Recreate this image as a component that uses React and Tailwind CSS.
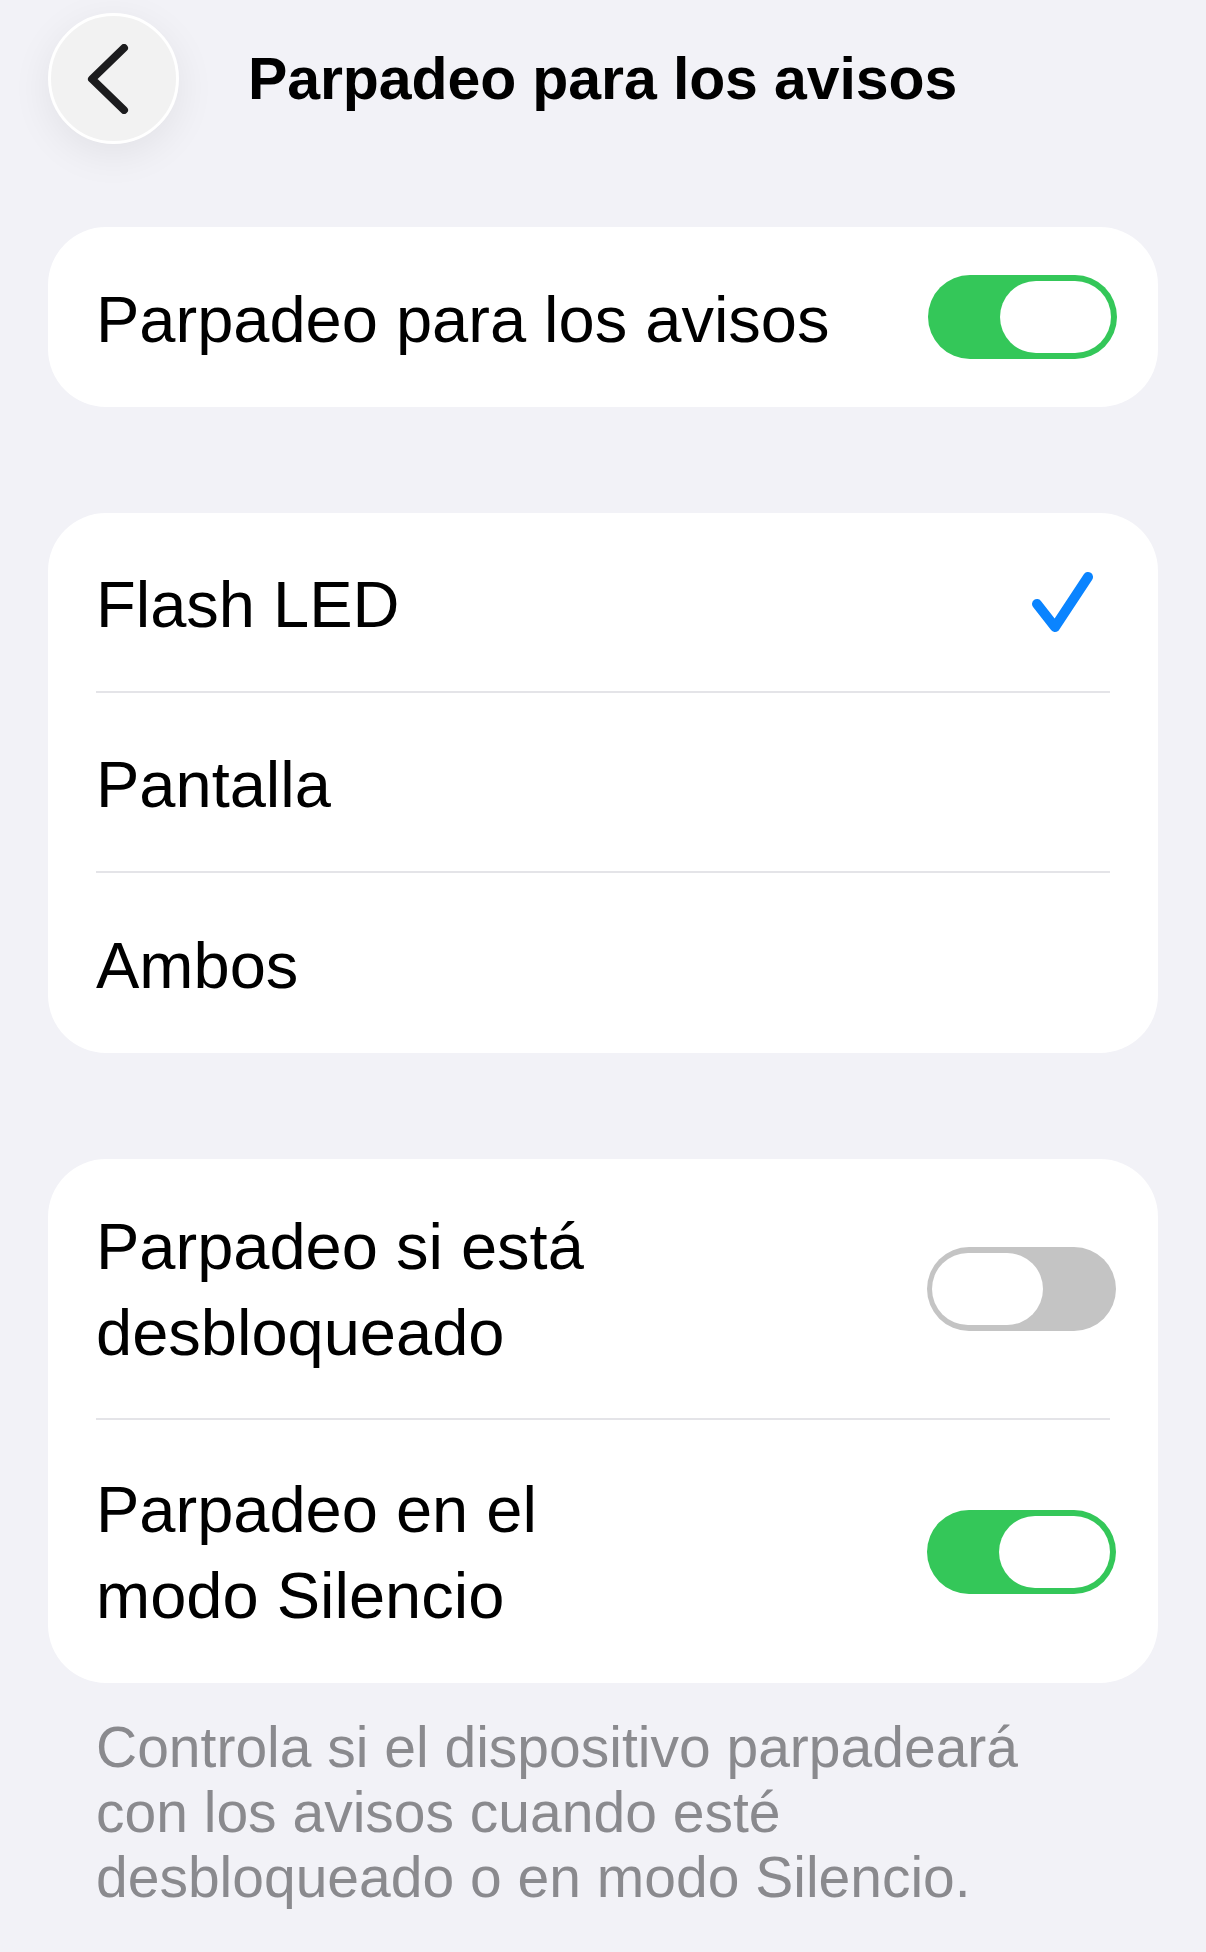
import React from 'react';

const font = "font-['Liberation_Sans','Noto_Sans',Arial,sans-serif]";

const Toggle = ({ on }) => (
  <div
    className={`w-[189px] h-[84px] rounded-full flex items-center flex-shrink-0 ${
      on ? 'bg-[#34c759] justify-end pr-[6px]' : 'bg-[#c4c4c4] justify-start pl-[5px]'
    }`}
  >
    <div className="w-[111px] h-[72px] rounded-full bg-white" />
  </div>
);

const Divider = () => <div className="h-[2px] bg-[#e4e4e8] ml-[48px] mr-[48px]" />;

const Check = () => (
  <svg width="66" height="66" viewBox="0 0 66 66" fill="none" className="flex-shrink-0">
    <path d="M7 35 L25 58 L58 8" stroke="#0a84ff" strokeWidth="10" strokeLinecap="round" strokeLinejoin="round" />
  </svg>
);

export default function App() {
  return (
    <div className={`min-h-screen bg-[#f2f2f7] text-black ${font}`}>
      <div className="px-[48px] pt-[13px]">
        {/* cabecera */}
        <div className="flex items-center h-[131px]">
          <button className="w-[131px] h-[131px] rounded-full bg-[#f2f2f2] border-[3px] border-white shadow-[0_10px_40px_rgba(0,0,0,0.07)] flex items-center justify-center flex-shrink-0">
            <svg width="44" height="70" viewBox="0 0 44 70" fill="none" className="mr-[12px]">
              <path d="M38 4 L6 35 L38 66" stroke="#1c1c1e" strokeWidth="8" strokeLinecap="round" strokeLinejoin="round" />
            </svg>
          </button>
          <h1 className="ml-[69px] text-[59px] font-bold leading-none tracking-[-0.1px] pt-[2px]">Parpadeo para los avisos</h1>
        </div>

        {/* interruptor principal */}
        <div className="mt-[83px] h-[180px] bg-white rounded-[58px] flex items-center justify-between pl-[48px] pr-[41px]">
          <span className="text-[65px] leading-none pt-[5px]">Parpadeo para los avisos</span>
          <Toggle on />
        </div>

        {/* opciones */}
        <div className="mt-[106px] bg-white rounded-[58px] overflow-hidden">
          <div className="h-[178px] flex items-center justify-between pl-[48px] pr-[62px]">
            <span className="text-[65px] leading-none pt-[5px]">Flash LED</span>
            <Check />
          </div>
          <Divider />
          <div className="h-[178px] flex items-center pl-[48px]">
            <span className="text-[65px] leading-none pt-[5px]">Pantalla</span>
          </div>
          <Divider />
          <div className="h-[180px] flex items-center pl-[48px]">
            <span className="text-[65px] leading-none pt-[5px]">Ambos</span>
          </div>
        </div>

        {/* ajustes extra */}
        <div className="mt-[106px] bg-white rounded-[58px] overflow-hidden">
          <div className="h-[259px] flex items-center justify-between pl-[48px] pr-[42px]">
            <span className="text-[65px] leading-[86px] pt-[2px]">
              Parpadeo si está
              <br />
              desbloqueado
            </span>
            <Toggle on={false} />
          </div>
          <Divider />
          <div className="h-[263px] flex items-center justify-between pl-[48px] pr-[42px]">
            <span className="text-[65px] leading-[86px] pt-[2px]">
              Parpadeo en el
              <br />
              modo Silencio
            </span>
            <Toggle on />
          </div>
        </div>

        <p className="mt-[32px] pl-[48px] text-[57px] leading-[65px] text-[#8a8a8e]">
          Controla si el dispositivo parpadeará
          <br />
          con los avisos cuando esté
          <br />
          desbloqueado o en modo Silencio.
        </p>
      </div>
    </div>
  );
}
